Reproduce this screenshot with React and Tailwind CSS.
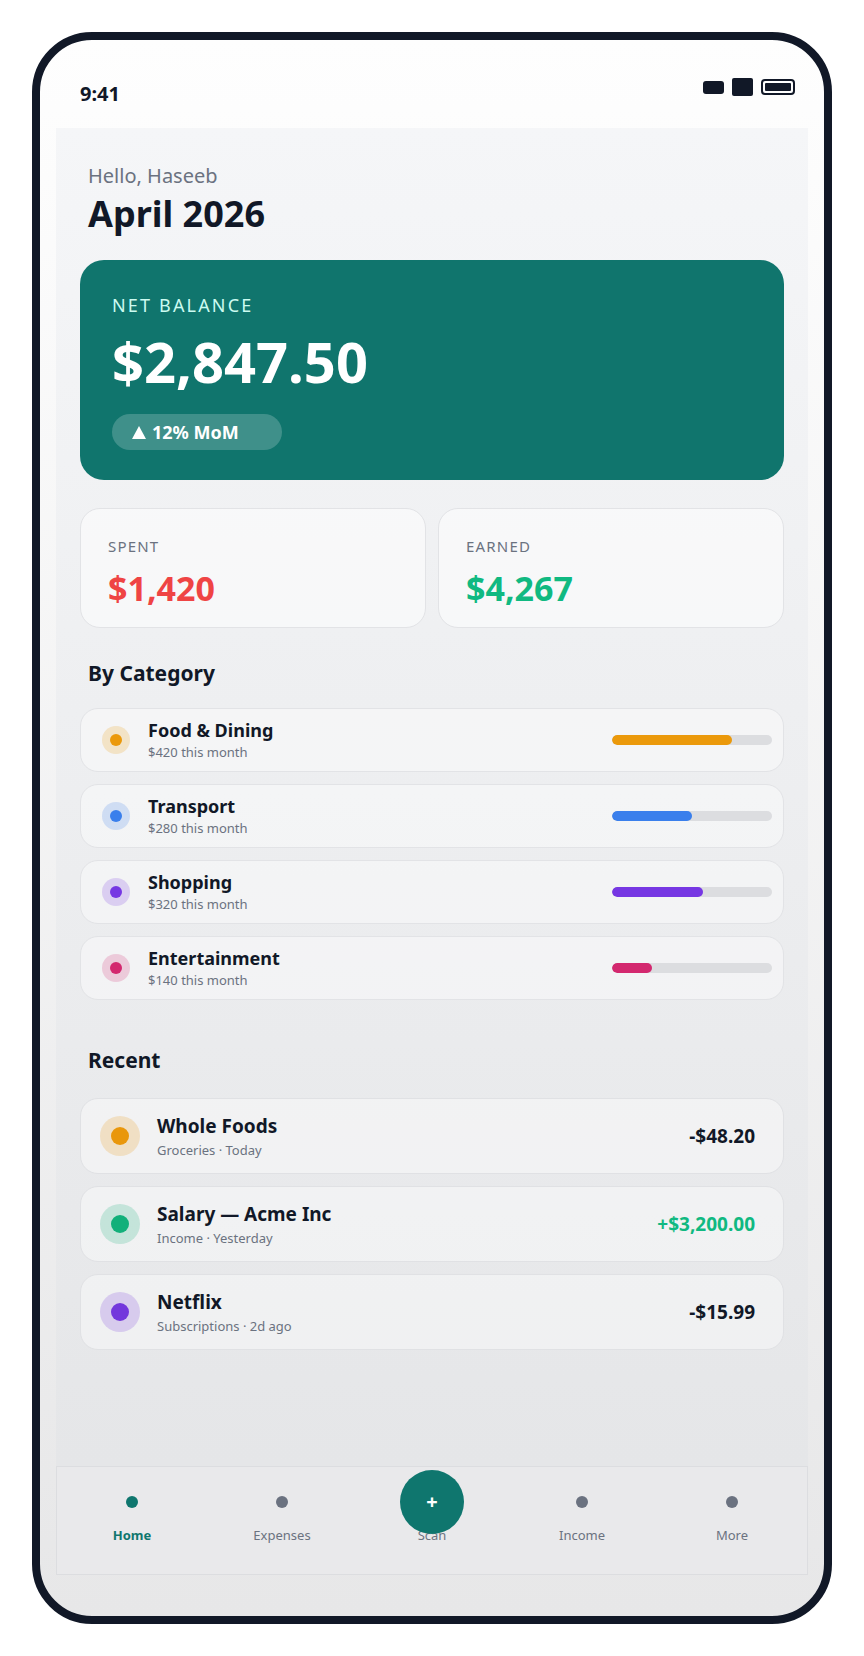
const categories = [
  { name: "Food & Dining", amount: 420, color: "bg-[#eb990b]", soft: "bg-[#eb990b]/20" },
  { name: "Transport", amount: 280, color: "bg-[#3a7fec]", soft: "bg-[#3a7fec]/20" },
  { name: "Shopping", amount: 320, color: "bg-[#7637e3]", soft: "bg-[#7637e3]/20" },
  { name: "Entertainment", amount: 140, color: "bg-[#d3286f]", soft: "bg-[#d3286f]/20" },
]

const recent = [
  { name: "Whole Foods", meta: "Groceries · Today", amount: "-$48.20", color: "bg-[#e9970c]", soft: "bg-[#e9970c]/20", income: false },
  { name: "Salary — Acme Inc", meta: "Income · Yesterday", amount: "+$3,200.00", color: "bg-[#12b07a]", soft: "bg-[#12b07a]/20", income: true },
  { name: "Netflix", meta: "Subscriptions · 2d ago", amount: "-$15.99", color: "bg-[#7337dc]", soft: "bg-[#7337dc]/20", income: false },
]

const tabs = ["Home", "Expenses", "Scan", "Income", "More"]

const MAX = 560

function StatusBar() {
  return (
    <div className="h-[88px] shrink-0 flex justify-between items-start pl-10 pr-[29px]">
      <span className="pt-[40px] text-[20px] leading-[28px] font-bold text-[#111827]">9:41</span>
      <div className="pt-[38px] flex items-center gap-2">
        <div className="w-[21px] h-[13px] rounded-[3px] bg-[#111827]"></div>
        <div className="w-[21px] h-[18px] rounded-[2px] bg-[#111827]"></div>
        <div className="w-[34px] h-[16px] rounded-[4px] border-2 border-[#111827] p-[2px]">
          <div className="w-full h-full rounded-[1px] bg-[#111827]"></div>
        </div>
      </div>
    </div>
  )
}

function CategoryRow({ c }) {
  const pct = Math.round((c.amount / MAX) * 100)
  return (
    <div className="h-[64px] flex items-center pl-[21px] pr-[11px] rounded-[18px] border border-[#e2e3e6] bg-white/40">
      <div className={`w-7 h-7 rounded-full ${c.soft} flex items-center justify-center shrink-0`}>
        <div className={`w-3 h-3 rounded-full ${c.color}`}></div>
      </div>
      <div className="ml-[18px] flex flex-col">
        <span className="text-[18px] leading-[22px] font-bold text-[#111827]">{c.name}</span>
        <span className="mt-[2px] text-[13px] leading-[18px] text-[#6b7280]">${c.amount} this month</span>
      </div>
      <div className="ml-auto w-[160px] h-[10px] rounded-full bg-[#dcdde0] overflow-hidden">
        <div className={`h-full rounded-full ${c.color}`} style={{ width: `${pct}%` }}></div>
      </div>
    </div>
  )
}

function RecentRow({ r }) {
  return (
    <div className="h-[76px] flex items-center pl-[19px] pr-[28px] rounded-[18px] border border-[#e0e1e4] bg-white/40">
      <div className={`w-10 h-10 rounded-full ${r.soft} flex items-center justify-center shrink-0`}>
        <div className={`w-[18px] h-[18px] rounded-full ${r.color}`}></div>
      </div>
      <div className="ml-[17px] pt-[1px] flex flex-col">
        <span className="text-[19px] leading-[24px] font-bold text-[#111827]">{r.name}</span>
        <span className="mt-[3px] text-[13px] leading-[18px] text-[#6b7280]">{r.meta}</span>
      </div>
      <span className={`ml-auto text-[19px] font-bold ${r.income ? "text-[#10b981]" : "text-[#111827]"}`}>
        {r.amount}
      </span>
    </div>
  )
}

function BottomNav() {
  return (
    <div className="h-[109px] shrink-0 mx-4 grid grid-cols-5 border border-[#dcdde0] bg-[#e9e9eb]">
      {tabs.map((t, i) => {
        const active = i === 0
        const scan = t === "Scan"
        return (
          <div key={t} className="flex flex-col items-center pt-[29px]">
            <div className={`relative w-3 h-3 rounded-full ${active ? "bg-[#0f766e]" : scan ? "" : "bg-[#6b7280]"}`}>
              {scan && (
                <div className="absolute z-10 left-1/2 top-1/2 -translate-x-1/2 -translate-y-1/2 w-16 h-16 rounded-full bg-[#0f766e] flex items-center justify-center text-white text-[20px] font-bold">
                  +
                </div>
              )}
            </div>
            <span className={`mt-[18px] text-[13px] leading-[18px] ${active ? "font-bold text-[#0f766e]" : "text-[#6b7280]"}`}>
              {t}
            </span>
          </div>
        )
      })}
    </div>
  )
}

export default function App() {
  return (
    <div className="min-h-[1656px] bg-white p-8" style={{ fontFamily: '"Noto Sans", "Open Sans", sans-serif' }}>
      <div className="w-[800px] h-[1592px] rounded-[60px] border-8 border-[#111827] overflow-hidden flex flex-col bg-gradient-to-b from-[#fefefe] to-[#e7e7e8]">
        <StatusBar />

        <main className="flex-1 mx-4 px-6 bg-gradient-to-b from-[#f5f6f8] to-[#e5e6e8]">
          <p className="pt-[34px] px-2 text-[20px] leading-[28px] text-[#6b7280]">Hello, Haseeb</p>
          <h1 className="mt-1 px-2 text-[36px] leading-[40px] font-bold text-[#111827]">April 2026</h1>

          <div className="mt-[26px] h-[220px] rounded-3xl bg-[#10756d] pl-8 pt-[33px]">
            <p className="text-[18px] leading-[24px] tracking-[0.12em] text-[#ccfbf1]">NET BALANCE</p>
            <p className="mt-4 text-[56px] leading-none font-bold text-white">$2,847.50</p>
            <div className="mt-[25px] w-[170px] h-9 rounded-full bg-white/20 flex items-center gap-[6px] pl-[20px] text-[18px] font-bold text-white">
              <svg width="14" height="13" viewBox="0 0 14 13" className="shrink-0">
                <polygon points="7,0 14,13 0,13" fill="white" />
              </svg>
              <span>12% MoM</span>
            </div>
          </div>

          <div className="mt-7 grid grid-cols-2 gap-3">
            <div className="h-[120px] rounded-[20px] border border-[#e2e3e6] bg-white/50 pl-[27px] pt-[27px]">
              <p className="text-[15px] leading-[20px] tracking-[0.08em] text-[#6b7280]">SPENT</p>
              <p className="mt-[15px] text-[34px] leading-none font-bold text-[#ef4444]">$1,420</p>
            </div>
            <div className="h-[120px] rounded-[20px] border border-[#e2e3e6] bg-white/50 pl-[27px] pt-[27px]">
              <p className="text-[15px] leading-[20px] tracking-[0.08em] text-[#6b7280]">EARNED</p>
              <p className="mt-[15px] text-[34px] leading-none font-bold text-[#10b981]">$4,267</p>
            </div>
          </div>

          <h2 className="mt-[31px] px-2 text-[21px] leading-[28px] font-bold text-[#111827]">By Category</h2>
          <div className="mt-[21px] flex flex-col gap-3">
            {categories.map((c) => (
              <CategoryRow key={c.name} c={c} />
            ))}
          </div>

          <h2 className="mt-[46px] px-2 text-[21px] leading-[28px] font-bold text-[#111827]">Recent</h2>
          <div className="mt-[24px] flex flex-col gap-3">
            {recent.map((r) => (
              <RecentRow key={r.name} r={r} />
            ))}
          </div>
        </main>

        <BottomNav />
        <div className="h-[41px] shrink-0"></div>
      </div>
    </div>
  )
}
